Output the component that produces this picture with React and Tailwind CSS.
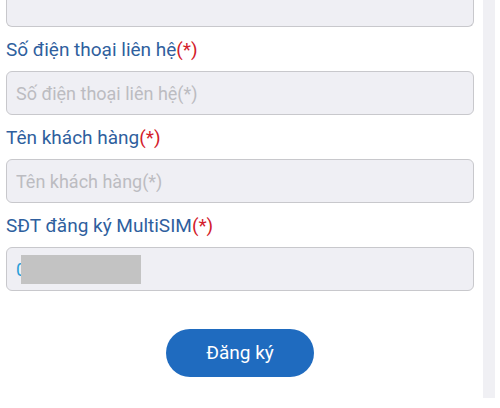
import React from "react";

const Label = ({ children }) => (
  <div className="pt-[11px] pb-[9px] text-[19px] leading-[24px] text-[#2f5f9e]">
    {children}
    <span className="text-[#d3202b]">(*)</span>
  </div>
);

const Field = ({ placeholder }) => (
  <input
    type="text"
    placeholder={placeholder}
    className="w-full h-[44px] px-[9px] bg-[#efeff4] border border-[#c8c8cc] rounded-[6px] text-[18px] text-[#333] placeholder:text-[#bcbcc1] outline-none"
  />
);

const App = () => {
  return (
    <div
      className="flex w-[500px] h-[408px] bg-white overflow-hidden"
      style={{ fontFamily: "Roboto, 'Noto Sans', sans-serif" }}
    >
      <div className="flex flex-col w-[483px] pl-[6px] pr-[9px]">
        <div className="h-[27px] bg-[#efeff4] border-x border-b border-[#c8c8cc] rounded-b-[6px]" />

        <Label>Số điện thoại liên hệ</Label>
        <Field placeholder="Số điện thoại liên hệ(*)" />

        <Label>Tên khách hàng</Label>
        <Field placeholder="Tên khách hàng(*)" />

        <Label>SĐT đăng ký MultiSIM</Label>
        <div className="flex items-center h-[44px] pl-[9px] bg-[#efeff4] border border-[#c8c8cc] rounded-[6px]">
          <span className="text-[18px] text-[#2a9fd8]">0</span>
          <div className="-ml-[5px] w-[120px] h-[29px] bg-[#c3c3c3]" />
        </div>

        <div className="flex justify-center mt-[38px]">
          <button
            type="submit"
            className="w-[148px] h-[48px] rounded-full bg-[#1f6bbf] text-white text-[19px]"
          >
            Đăng ký
          </button>
        </div>
      </div>
      <div className="w-[12px] h-[398px] bg-[#f0f0f4]" />
    </div>
  );
};

export default App;
